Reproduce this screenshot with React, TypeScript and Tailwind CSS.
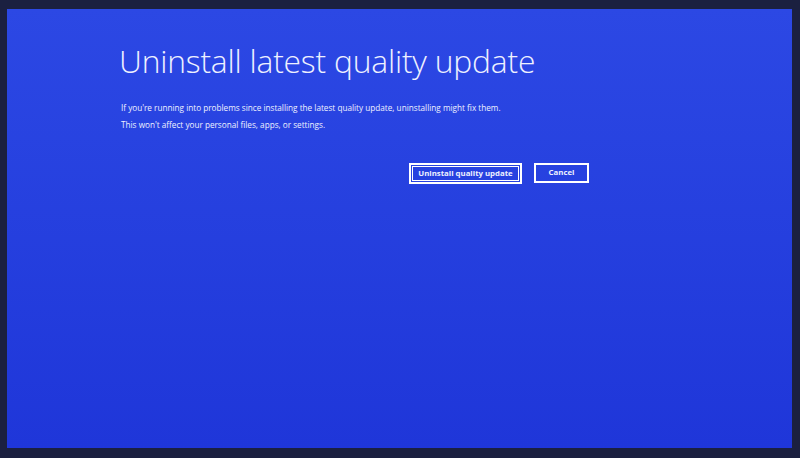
export default function App() {
  return (
    <div className="h-[458px] w-[800px] overflow-hidden bg-[#1b2040] pl-[7px] pt-[9px]">
      <div
        className="h-[439px] w-[785px] bg-gradient-to-b from-[#2c48e4] to-[#1f36d9] pl-[112px] pt-[30px] text-[#eef1ff]"
        style={{ fontFamily: '"Open Sans", "Noto Sans", sans-serif' }}
      >
        <div className="w-[470px]">
          <h1 className="whitespace-nowrap text-[31.8px] font-light leading-[44px] tracking-[-0.2px]">
            Uninstall latest quality update
          </h1>
          <div className="mt-[16px] pl-[2px] text-[8.2px] leading-[17px]">
            <p>
              If you're running into problems since installing the latest quality update, uninstalling might fix them.
            </p>
            <p>This won't affect your personal files, apps, or settings.</p>
          </div>
          <div className="mt-[30px] flex justify-end gap-[12px]">
            <button className="h-[21px] w-[113px] whitespace-nowrap border-2 border-white p-[1px] text-[7.8px] font-bold">
              <span className="flex h-full w-full items-center justify-center border border-white">
                Uninstall quality update
              </span>
            </button>
            <button className="h-[20px] w-[55px] whitespace-nowrap border-2 border-white text-[7.8px] font-bold">
              Cancel
            </button>
          </div>
        </div>
      </div>
    </div>
  );
}
